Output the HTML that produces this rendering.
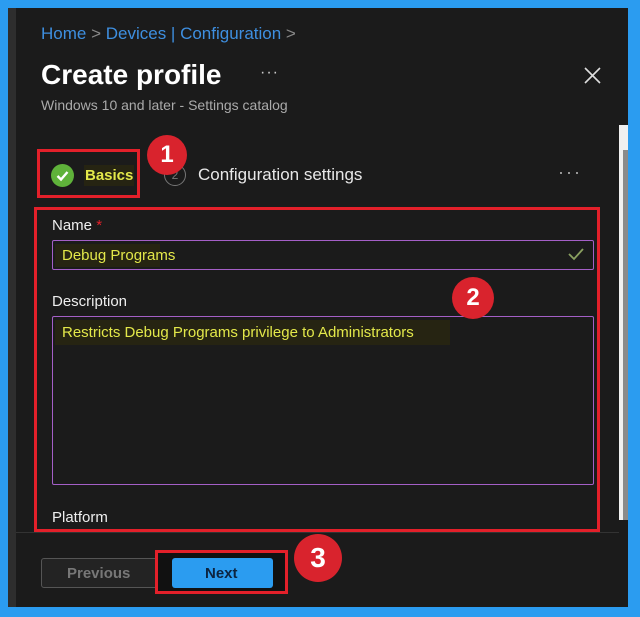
<!DOCTYPE html>
<html><head><meta charset="utf-8"><style>
*{margin:0;padding:0;box-sizing:border-box}
body{width:640px;height:617px;background:#2b9cf0;position:relative;overflow:hidden;font-family:"Liberation Sans",sans-serif}
.a{position:absolute}
.panel{left:8px;top:8px;width:620px;height:599px;background:#1b1b1b}
.t{position:absolute;white-space:nowrap}
.red{position:absolute;border:3px solid #e3202a}
.badge{position:absolute;background:#d9232d;border-radius:50%;color:#fff;font-weight:bold;display:flex;align-items:center;justify-content:center}
.inp{position:absolute;border:1px solid #a45fc7;border-radius:2px}
.hl{background:#262412;color:#e3e84a}
</style></head><body>
<div class="a panel"></div>
<div class="a" style="left:8px;top:8px;width:8px;height:599px;background:#2e2e2e"></div>
<div class="t" style="left:41px;top:24px;font-size:17px;color:#3e8fe0">Home <span style="color:#888">&gt;</span> Devices | Configuration <span style="color:#888">&gt;</span></div>
<div class="t" style="left:41px;top:59px;font-size:28px;font-weight:bold;color:#fff">Create profile</div>
<div class="t" style="left:260px;top:64px;font-size:16px;color:#ccc;letter-spacing:1px">···</div>
<div class="t" style="left:41px;top:97px;font-size:14px;color:#aaa">Windows 10 and later - Settings catalog</div>
<svg class="a" style="left:584px;top:67px" width="17" height="17"><path d="M1 1L16 16M16 1L1 16" stroke="#ddd" stroke-width="1.6"/></svg>
<div class="a" style="left:619px;top:125px;width:9px;height:395px;background:#f0f0f0"></div>
<div class="a" style="left:623px;top:150px;width:5px;height:370px;background:#8a8a8a"></div>

<div class="red" style="left:37px;top:149px;width:103px;height:49px"></div>
<div class="a" style="left:51px;top:164px;width:23px;height:23px;border-radius:50%;background:#5fb23a"></div>
<svg class="a" style="left:51px;top:164px" width="23" height="23"><path d="M6.5 12L10 15.5L16.5 8" stroke="#fff" stroke-width="2.4" fill="none"/></svg>
<div class="t hl" style="left:84px;top:165px;font-size:15px;font-weight:bold;padding:2px 1px">Basics</div>
<div class="a" style="left:164px;top:164px;width:22px;height:22px;border-radius:50%;border:1.5px solid #777;color:#777;font-size:12px;display:flex;align-items:center;justify-content:center">2</div>
<div class="t" style="left:198px;top:165px;font-size:17px;color:#e8e8e8">Configuration settings</div>
<div class="badge" style="left:147px;top:135px;width:40px;height:40px;font-size:24px">1</div>
<div class="t" style="left:558px;top:162px;font-size:18px;color:#aaa;letter-spacing:2px">···</div>

<div class="red" style="left:34px;top:207px;width:566px;height:325px"></div>
<div class="t" style="left:52px;top:217px;font-size:15px;color:#eee">Name <span style="color:#e3202a">*</span></div>
<div class="inp" style="left:52px;top:240px;width:542px;height:30px"></div>
<div class="t hl" style="left:55px;top:244px;font-size:15px;padding:3px 7px;width:105px">Debug Programs</div>
<svg class="a" style="left:568px;top:247px" width="16" height="14"><path d="M1 7L6 12L15 2" stroke="#8aa060" stroke-width="1.8" fill="none"/></svg>
<div class="t" style="left:52px;top:293px;font-size:15px;color:#eee">Description</div>
<div class="inp" style="left:52px;top:316px;width:542px;height:169px"></div>
<div class="t hl" style="left:55px;top:320px;font-size:15px;padding:4px 7px;width:395px">Restricts Debug Programs privilege to Administrators</div>
<div class="badge" style="left:452px;top:277px;width:42px;height:42px;font-size:24px">2</div>
<div class="t" style="left:52px;top:509px;font-size:15px;color:#eee">Platform</div>

<div class="a" style="left:16px;top:532px;width:603px;height:1px;background:#333"></div>
<div class="a" style="left:41px;top:558px;width:124px;height:30px;border:1px solid #555;border-radius:3px;background:#232323"></div>
<div class="t" style="left:67px;top:565px;font-size:15px;font-weight:bold;color:#777">Previous</div>
<div class="red" style="left:155px;top:550px;width:133px;height:44px;background:#111"></div>
<div class="a" style="left:172px;top:558px;width:101px;height:30px;border-radius:3px;background:#2b9cf0"></div>
<div class="t" style="left:205px;top:565px;font-size:15px;font-weight:bold;color:#0c2440">Next</div>
<div class="badge" style="left:294px;top:534px;width:48px;height:48px;font-size:28px">3</div>
</body></html>
